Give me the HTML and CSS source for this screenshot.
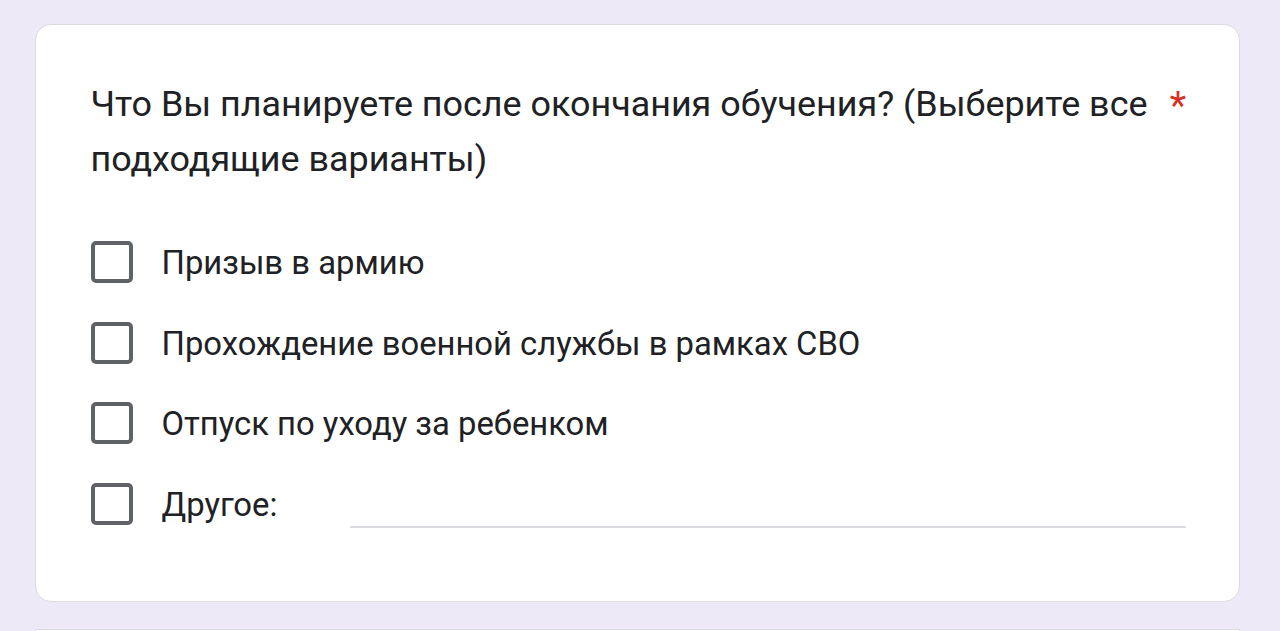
FILE: index.html
```html
<!DOCTYPE html>
<html lang="ru">
<head>
<meta charset="utf-8">
<link rel="stylesheet" href="styles.css">
</head>
<body>
<div class="page">
  <div class="card">
    <div class="question">
      <div class="qtext">Что Вы планируете после окончания обучения? (Выберите все подходящие варианты)</div>
      <span class="req">*</span>
    </div>
    <div class="options">
      <label class="opt"><span class="box"></span><span class="label">Призыв в армию</span></label>
      <label class="opt"><span class="box"></span><span class="label">Прохождение военной службы в рамках СВО</span></label>
      <label class="opt"><span class="box"></span><span class="label">Отпуск по уходу за ребенком</span></label>
      <label class="opt"><span class="box"></span><span class="label other">Другое:</span><span class="line"></span></label>
    </div>
  </div>
  <div class="card next"></div>
</div>
</body>
</html>
```
FILE: styles.css
```css
html, body {
  margin: 0;
  padding: 0;
  background: #ede9f7;
  overflow: hidden;
}
.page {
  display: flex;
  flex-direction: column;
  gap: 27px;
  padding: 24px 40px 0 35px;
  font-family: Roboto, "Noto Sans", sans-serif;
  color: #202124;
}
.card {
  background: #fff;
  border: 1.5px solid #dadce0;
  border-radius: 16px;
  padding: 52px 53px 76px 54.5px;
}
.card.next {
  height: 1px;
  padding: 0;
  border-bottom: none;
  border-radius: 16px 16px 0 0;
}
.question {
  display: flex;
  align-items: flex-start;
  gap: 10px;
}
.qtext {
  flex: 1;
  font-size: 35.9px;
  line-height: 55px;
}
.req {
  color: #d93025;
  font-size: 38px;
  line-height: 44px;
  padding-top: 7px;
}
.options {
  display: flex;
  flex-direction: column;
  gap: 38.5px;
  margin-top: 54px;
}
.opt {
  display: flex;
  align-items: center;
  height: 42px;
}
.box {
  box-sizing: border-box;
  width: 42px;
  height: 42px;
  border: 4px solid #5f6368;
  border-radius: 5px;
  flex: none;
}
.label {
  margin-left: 29px;
  font-size: 32.8px;
  padding-top: 2px;
}
.line {
  flex: 1;
  align-self: flex-end;
  height: 2px;
  background: #dadce0;
  margin-left: 73px;
  margin-bottom: -3px;
}
```
